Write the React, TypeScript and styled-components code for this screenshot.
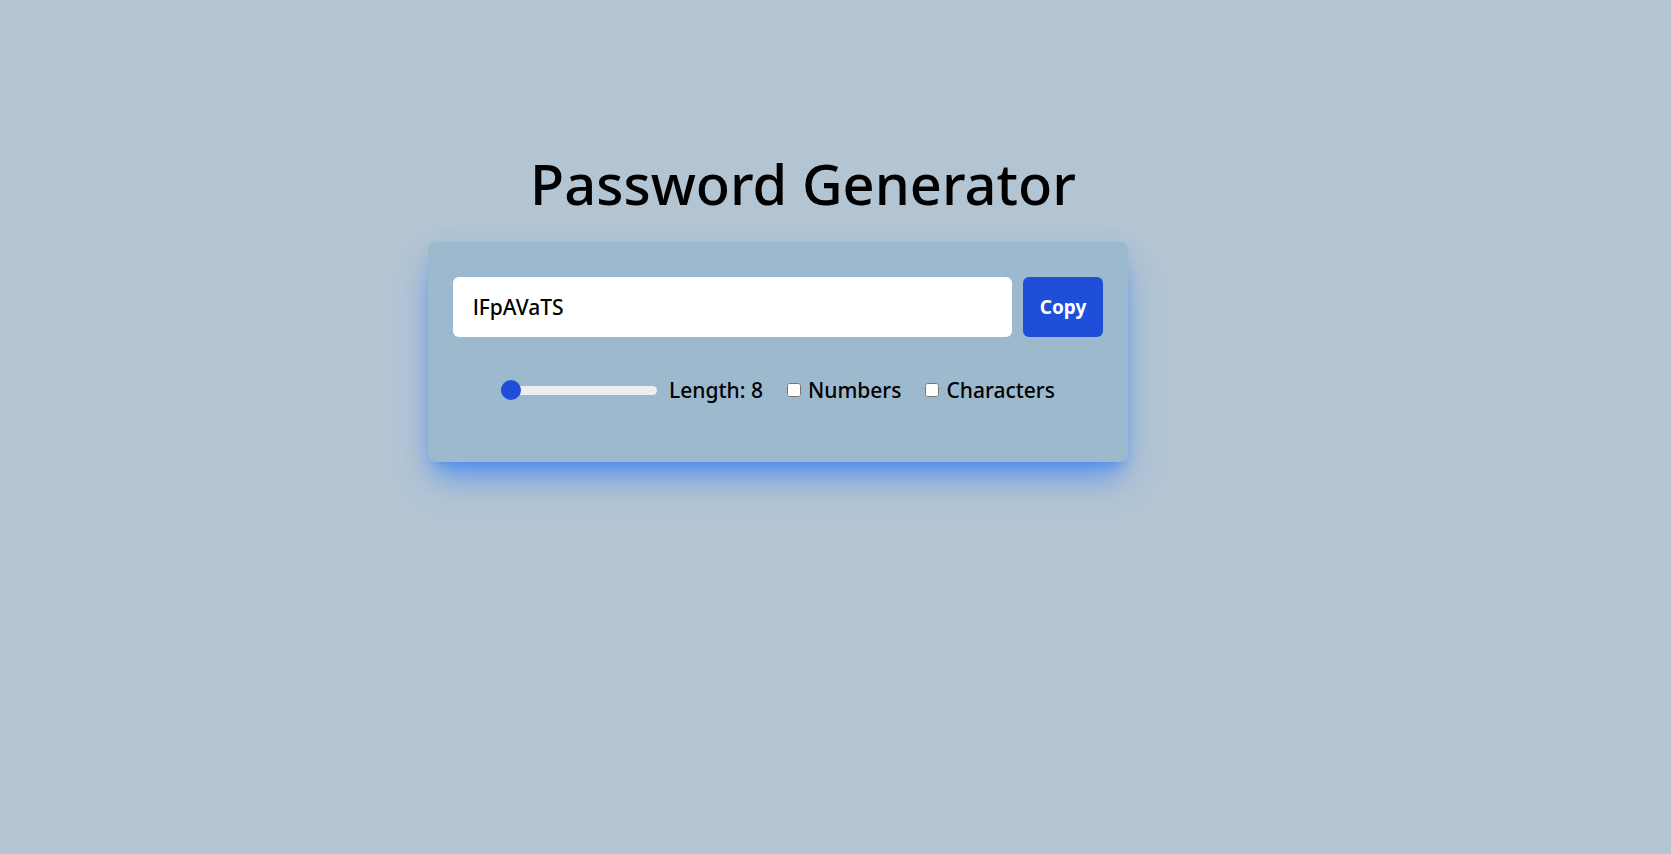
import React, { useState } from "react";
import styled, { createGlobalStyle } from "styled-components";

const GlobalStyle = createGlobalStyle`
  body {
    margin: 0;
    background-color: #b3c5d3;
    font-family: "Noto Sans", "Open Sans", sans-serif;
    color: #000;
  }
`;

const Page = styled.div`
  min-height: 854px;
  padding-top: 143px;
  box-sizing: border-box;
`;

const Column = styled.div`
  width: 750px;
  margin-left: 428px;
  display: flex;
  flex-direction: column;
`;

const Title = styled.h1`
  margin: 0 0 19px;
  text-align: center;
  font-size: 56px;
  font-weight: 500;
  line-height: 80px;
`;

const Card = styled.div`
  width: 700px;
  box-sizing: border-box;
  padding: 35px 25px 58px;
  background-color: #9db9ce;
  border-radius: 8px;
  box-shadow: 0 22px 30px -8px rgba(59, 130, 246, 0.65),
    0 8px 12px -6px rgba(59, 130, 246, 0.6),
    0 10px 30px -10px rgba(59, 130, 246, 0.35);
`;

const InputRow = styled.div`
  display: flex;
  gap: 11px;
  margin-bottom: 39px;
`;

const PasswordField = styled.input`
  flex: 1;
  height: 60px;
  border: none;
  outline: none;
  border-radius: 6px;
  padding: 0 20px;
  font-family: inherit;
  font-size: 21px;
  font-weight: 500;
  color: #000;
  background: #fff;
`;

const CopyButton = styled.button`
  width: 80px;
  height: 60px;
  border: none;
  border-radius: 6px;
  background-color: #1f4fd8;
  color: #fff;
  font-family: inherit;
  font-size: 19px;
  font-weight: 700;
  cursor: pointer;
`;

const Options = styled.div`
  display: flex;
  justify-content: center;
  align-items: center;
  gap: 24px;
  font-size: 21px;
  font-weight: 500;
`;

const SliderGroup = styled.label`
  display: flex;
  align-items: center;
  gap: 12px;
`;

const Slider = styled.input`
  -webkit-appearance: none;
  appearance: none;
  width: 156px;
  height: 9px;
  margin: 0;
  border-radius: 5px;
  background: linear-gradient(to right, #1f4fd8 0 12px, #eeeeee 12px 100%);
  outline: none;
  cursor: pointer;

  &::-webkit-slider-thumb {
    -webkit-appearance: none;
    appearance: none;
    width: 20px;
    height: 20px;
    border-radius: 50%;
    background: #1f4fd8;
    border: none;
  }
`;

const CheckGroup = styled.label`
  display: flex;
  align-items: center;
  gap: 7px;
  cursor: pointer;
`;

const Check = styled.input`
  width: 14px;
  height: 14px;
  margin: 0;
`;

export default function App() {
  const [length, setLength] = useState(8);
  const [numbers, setNumbers] = useState(false);
  const [chars, setChars] = useState(false);

  return (
    <Page>
      <GlobalStyle />
      <Column>
        <Title>Password Generator</Title>
        <Card>
          <InputRow>
            <PasswordField type="text" value="lFpAVaTS" readOnly />
            <CopyButton>Copy</CopyButton>
          </InputRow>
          <Options>
            <SliderGroup>
              <Slider
                type="range"
                min={8}
                max={100}
                value={length}
                onChange={(e) => setLength(Number(e.target.value))}
              />
              <span>Length: {length}</span>
            </SliderGroup>
            <CheckGroup>
              <Check
                type="checkbox"
                checked={numbers}
                onChange={() => setNumbers(!numbers)}
              />
              Numbers
            </CheckGroup>
            <CheckGroup>
              <Check
                type="checkbox"
                checked={chars}
                onChange={() => setChars(!chars)}
              />
              Characters
            </CheckGroup>
          </Options>
        </Card>
      </Column>
    </Page>
  );
}
